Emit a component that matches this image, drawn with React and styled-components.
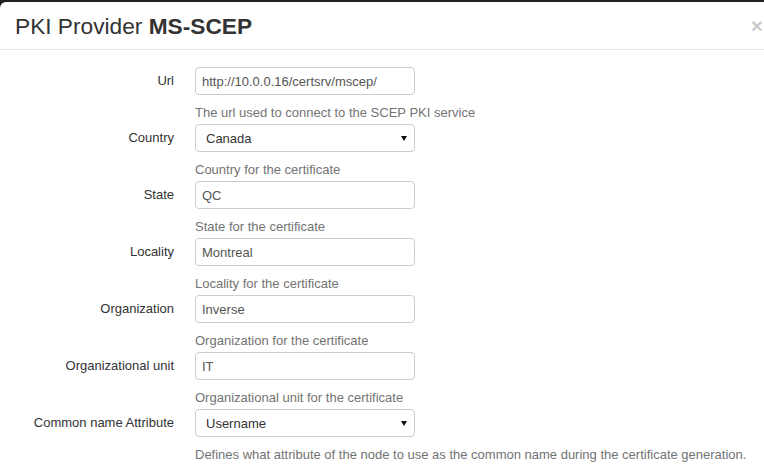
import React from "react";
import styled, { createGlobalStyle } from "styled-components";

const GlobalStyle = createGlobalStyle`
  html, body {
    margin: 0;
    padding: 0;
    background-color: #222;
    overflow: hidden;
  }
  body {
    font-family: "Liberation Sans", Arial, Helvetica, sans-serif;
    font-size: 13px;
    color: #333;
  }
`;

const Backdrop = styled.div`
  padding-top: 2px;
  height: 464px;
  box-sizing: border-box;
`;

const Modal = styled.div`
  background-color: #fff;
  border-top-left-radius: 6px;
  height: 100%;
  overflow: hidden;
`;

const Header = styled.div`
  display: flex;
  justify-content: space-between;
  align-items: flex-start;
  padding: 11px 1px 10px 15px;
  border-bottom: 1px solid #e5e5e5;
`;

const Title = styled.h4`
  margin: 0;
  font-size: 22.7px;
  font-weight: normal;
  line-height: 26px;
  color: #333;
  > strong {
    font-weight: bold;
  }
`;

const Close = styled.button`
  border: 0;
  background: transparent;
  padding: 0;
  margin-top: 2px;
  font-family: "Liberation Sans", Arial, sans-serif;
  font-size: 21px;
  font-weight: bold;
  line-height: 1;
  color: #000;
  opacity: 0.2;
  cursor: pointer;
`;

const Body = styled.div`
  padding-top: 17px;
`;

const Row = styled.div`
  display: grid;
  grid-template-columns: 174px auto;
  column-gap: 21px;
  align-items: start;
`;

const Label = styled.label`
  text-align: right;
  line-height: 28px;
  color: #333;
`;

const Field = styled.div`
  display: flex;
  flex-direction: column;
  align-items: flex-start;
`;

const Input = styled.input`
  width: 220px;
  height: 28px;
  box-sizing: border-box;
  padding: 0 6px;
  border: 1px solid #ccc;
  border-radius: 4px;
  font-family: inherit;
  font-size: 13px;
  color: #555;
  background-color: #fff;
  outline: none;
`;

const SelectBox = styled.div`
  position: relative;
  width: 220px;
  height: 28px;
`;

const Select = styled.select`
  appearance: none;
  width: 100%;
  height: 100%;
  box-sizing: border-box;
  padding: 0 10px;
  border: 1px solid #ccc;
  border-radius: 4px;
  background-color: #fff;
  font-family: inherit;
  font-size: 13px;
  color: #333;
  outline: none;
`;

const Caret = styled.span`
  position: absolute;
  right: 8px;
  top: 12px;
  width: 0;
  height: 0;
  border-left: 3.5px solid transparent;
  border-right: 3.5px solid transparent;
  border-top: 5px solid #111;
  pointer-events: none;
`;

const Help = styled.span`
  display: block;
  margin: 8px 0 2px;
  line-height: 19px;
  color: #737373;
  white-space: nowrap;
`;

const fields = [
  { label: "Url", value: "http://10.0.0.16/certsrv/mscep/", help: "The url used to connect to the SCEP PKI service" },
  { label: "Country", value: "Canada", select: true, help: "Country for the certificate" },
  { label: "State", value: "QC", help: "State for the certificate" },
  { label: "Locality", value: "Montreal", help: "Locality for the certificate" },
  { label: "Organization", value: "Inverse", help: "Organization for the certificate" },
  { label: "Organizational unit", value: "IT", help: "Organizational unit for the certificate" },
  {
    label: "Common name Attribute",
    value: "Username",
    select: true,
    help: "Defines what attribute of the node to use as the common name during the certificate generation.",
  },
];

const App = () => (
  <Backdrop>
    <GlobalStyle />
    <Modal>
      <Header>
        <Title>
          PKI Provider <strong>MS-SCEP</strong>
        </Title>
        <Close>×</Close>
      </Header>
      <Body>
        {fields.map(f => (
          <Row key={f.label}>
            <Label>{f.label}</Label>
            <Field>
              {f.select ? (
                <SelectBox>
                  <Select defaultValue={f.value}>
                    <option>{f.value}</option>
                  </Select>
                  <Caret />
                </SelectBox>
              ) : (
                <Input defaultValue={f.value} />
              )}
              <Help>{f.help}</Help>
            </Field>
          </Row>
        ))}
      </Body>
    </Modal>
  </Backdrop>
);

export default App;
